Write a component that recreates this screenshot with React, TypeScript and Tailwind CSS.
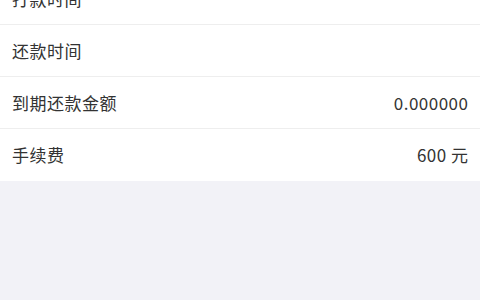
export default function App() {
  const rows: [string, string][] = [
    ["打款时间", ""],
    ["还款时间", ""],
    ["到期还款金额", "0.000000"],
    ["手续费", "600 元"],
  ];
  return (
    <div
      className="w-[480px] h-[300px] overflow-hidden bg-[#f2f2f7]"
      style={{ fontFamily: '"Noto Sans CJK SC", "Noto Sans", sans-serif' }}
    >
      <div className="mt-[-27px] bg-white">
        {rows.map(([l, r], i) => (
          <div
            key={l}
            className={`flex h-[52px] items-center justify-between px-3 text-[17px] leading-[24px] tracking-[0.5px] text-[#333333] ${
              i < rows.length - 1 ? "border-b border-[#eeeeee]" : ""
            }`}
          >
            <span>{l}</span>
            <span className="mr-[-0.5px]">{r}</span>
          </div>
        ))}
      </div>
    </div>
  );
}
